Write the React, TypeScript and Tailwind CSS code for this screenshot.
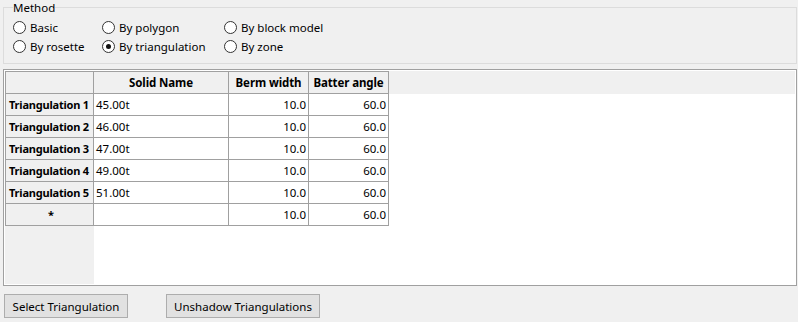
import React from "react";

type Row = { name: string; solid: string; berm: string; batter: string };

const rows: Row[] = [
  { name: "Triangulation 1", solid: "45.00t", berm: "10.0", batter: "60.0" },
  { name: "Triangulation 2", solid: "46.00t", berm: "10.0", batter: "60.0" },
  { name: "Triangulation 3", solid: "47.00t", berm: "10.0", batter: "60.0" },
  { name: "Triangulation 4", solid: "49.00t", berm: "10.0", batter: "60.0" },
  { name: "Triangulation 5", solid: "51.00t", berm: "10.0", batter: "60.0" },
  { name: "*", solid: "", berm: "10.0", batter: "60.0" },
];

function Radio({ label, checked = false, width }: { label: string; checked?: boolean; width: string }) {
  return (
    <label className={`flex h-[19px] items-center gap-[4px] ${width}`}>
      <span className="flex h-[13px] w-[13px] shrink-0 items-center justify-center rounded-full border border-[#333333] bg-white">
        {checked && <span className="h-[5px] w-[5px] rounded-full bg-[#111111]" />}
      </span>
      <span>{label}</span>
    </label>
  );
}

export default function App() {
  return (
    <div className="h-[322px] w-[798px] overflow-hidden whitespace-nowrap bg-[#f0f0f0] text-[11.5px] leading-[15px] text-black [font-family:'Noto_Sans',sans-serif]">
      <fieldset className="ml-[3px] mr-px border border-[#dcdcdc] pb-[7px] pl-[9px] pt-[3px]">
        <legend className="px-0 leading-[15px]">Method</legend>
        <div className="flex">
          <Radio label="Basic" width="w-[89px]" />
          <Radio label="By polygon" width="w-[122px]" />
          <Radio label="By block model" width="w-[120px]" />
        </div>
        <div className="flex">
          <Radio label="By rosette" width="w-[89px]" />
          <Radio label="By triangulation" checked width="w-[122px]" />
          <Radio label="By zone" width="w-[120px]" />
        </div>
      </fieldset>

      <div className="ml-[3px] mr-px mt-[5px] h-[217px] border border-[#a0a0a0] bg-white p-px">
        <div className="flex h-full">
          <div className="flex w-[89px] shrink-0 flex-col bg-[#f0f0f0]">
            <div className="h-[23px] border border-[#a0a0a0]" />
            {rows.map((r) => (
              <div
                key={r.name}
                className={`flex h-[22px] items-center overflow-hidden border-b border-l border-r border-[#a0a0a0] pl-[3px] text-[11px] font-bold tracking-[-0.2px] ${
                  r.name === "*" ? "justify-center pl-0" : ""
                }`}
              >
                {r.name}
              </div>
            ))}
          </div>
          <div className="flex flex-1 flex-col">
            <div className="flex h-[23px] bg-[#f0f0f0] font-bold tracking-[-0.1px]">
              <div className="flex w-[135px] items-center justify-center border-b border-r border-t border-[#a0a0a0]">
                Solid Name
              </div>
              <div className="flex w-[80px] items-center justify-center border-b border-r border-t border-[#a0a0a0]">
                Berm width
              </div>
              <div className="flex w-[80px] items-center justify-center border-b border-r border-t border-[#a0a0a0]">
                Batter angle
              </div>
            </div>
            {rows.map((r) => (
              <div key={r.name} className="flex h-[22px]">
                <div className="flex w-[135px] items-center border-b border-r border-[#a0a0a0] px-[2px]">
                  {r.solid}
                </div>
                <div className="flex w-[80px] items-center justify-end border-b border-r border-[#a0a0a0] px-[2px]">
                  {r.berm}
                </div>
                <div className="flex w-[80px] items-center justify-end border-b border-r border-[#a0a0a0] px-[2px]">
                  {r.batter}
                </div>
              </div>
            ))}
          </div>
        </div>
      </div>

      <div className="ml-[4px] mt-[8px] flex gap-[38px]">
        <button className="h-[24px] w-[124px] border border-[#adadad] bg-[#e1e1e1]">
          Select Triangulation
        </button>
        <button className="h-[24px] w-[154px] border border-[#adadad] bg-[#e1e1e1]">
          Unshadow Triangulations
        </button>
      </div>
    </div>
  );
}
